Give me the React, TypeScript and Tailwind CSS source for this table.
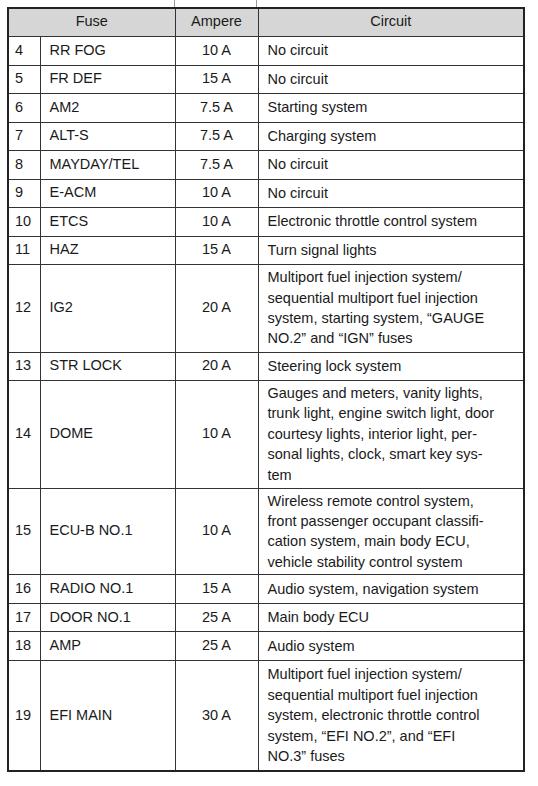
import React from "react";

type Row = { n: string; fuse: string; amp: string; lines: string[]; h: number };

const rows: Row[] = [
  { n: "4", fuse: "RR FOG", amp: "10 A", lines: ["No circuit"], h: 29 },
  { n: "5", fuse: "FR DEF", amp: "15 A", lines: ["No circuit"], h: 28 },
  { n: "6", fuse: "AM2", amp: "7.5 A", lines: ["Starting system"], h: 29 },
  { n: "7", fuse: "ALT-S", amp: "7.5 A", lines: ["Charging system"], h: 28 },
  { n: "8", fuse: "MAYDAY/TEL", amp: "7.5 A", lines: ["No circuit"], h: 29 },
  { n: "9", fuse: "E-ACM", amp: "10 A", lines: ["No circuit"], h: 28 },
  { n: "10", fuse: "ETCS", amp: "10 A", lines: ["Electronic throttle control system"], h: 29 },
  { n: "11", fuse: "HAZ", amp: "15 A", lines: ["Turn signal lights"], h: 28 },
  {
    n: "12",
    fuse: "IG2",
    amp: "20 A",
    lines: [
      "Multiport fuel injection system/",
      "sequential multiport fuel injection",
      "system, starting system, \u201cGAUGE",
      "NO.2\u201d and \u201cIGN\u201d fuses",
    ],
    h: 88,
  },
  { n: "13", fuse: "STR LOCK", amp: "20 A", lines: ["Steering lock system"], h: 28 },
  {
    n: "14",
    fuse: "DOME",
    amp: "10 A",
    lines: [
      "Gauges and meters, vanity lights,",
      "trunk light, engine switch light, door",
      "courtesy lights, interior light, per-",
      "sonal lights, clock, smart key sys-",
      "tem",
    ],
    h: 108,
  },
  {
    n: "15",
    fuse: "ECU-B NO.1",
    amp: "10 A",
    lines: [
      "Wireless remote control system,",
      "front passenger occupant classifi-",
      "cation system, main body ECU,",
      "vehicle stability control system",
    ],
    h: 84,
  },
  { n: "16", fuse: "RADIO NO.1", amp: "15 A", lines: ["Audio system, navigation system"], h: 29 },
  { n: "17", fuse: "DOOR NO.1", amp: "25 A", lines: ["Main body ECU"], h: 28 },
  { n: "18", fuse: "AMP", amp: "25 A", lines: ["Audio system"], h: 29 },
  {
    n: "19",
    fuse: "EFI MAIN",
    amp: "30 A",
    lines: [
      "Multiport fuel injection system/",
      "sequential multiport fuel injection",
      "system, electronic throttle control",
      "system, \u201cEFI NO.2\u201d, and \u201cEFI",
      "NO.3\u201d fuses",
    ],
    h: 110,
  },
];

export default function App() {
  return (
    <div
      className="w-[538px] h-[786px] bg-white text-[#1a1a1a] text-[14.5px]"
      style={{ fontFamily: '"Liberation Sans", Arial, sans-serif' }}
    >
      <div className="flex h-[7px] pl-[174px]">
        <div className="w-[83px] border-l border-r border-[#999]" />
      </div>
      <div className="pl-[7px]">
        <table className="border-collapse table-fixed border-2 border-[#222]" style={{ width: 516 }}>
          <colgroup>
            <col style={{ width: 32 }} />
            <col style={{ width: 135 }} />
            <col style={{ width: 83 }} />
            <col style={{ width: 266 }} />
          </colgroup>
          <thead>
            <tr className="h-[28px] bg-[#d6d6d6]">
              <th colSpan={2} className="border border-[#333] font-normal text-center p-0">
                Fuse
              </th>
              <th className="border border-[#333] font-normal text-center p-0">Ampere</th>
              <th className="border border-[#333] font-normal text-center p-0">Circuit</th>
            </tr>
          </thead>
          <tbody>
            {rows.map((r) => (
              <tr key={r.n} style={{ height: r.h }}>
                <td className="border border-[#333] pl-[6px] pr-0 py-0 align-middle">{r.n}</td>
                <td className="border border-[#333] pl-[9px] py-0 align-middle">{r.fuse}</td>
                <td className="border border-[#333] text-center py-0 align-middle">{r.amp}</td>
                <td className="border border-[#333] pl-[9px] pr-0 py-[2px] align-middle leading-[20.4px]">
                  {r.lines.map((l, i) => (
                    <div key={i} className="whitespace-nowrap">
                      {l}
                    </div>
                  ))}
                </td>
              </tr>
            ))}
          </tbody>
        </table>
      </div>
    </div>
  );
}
